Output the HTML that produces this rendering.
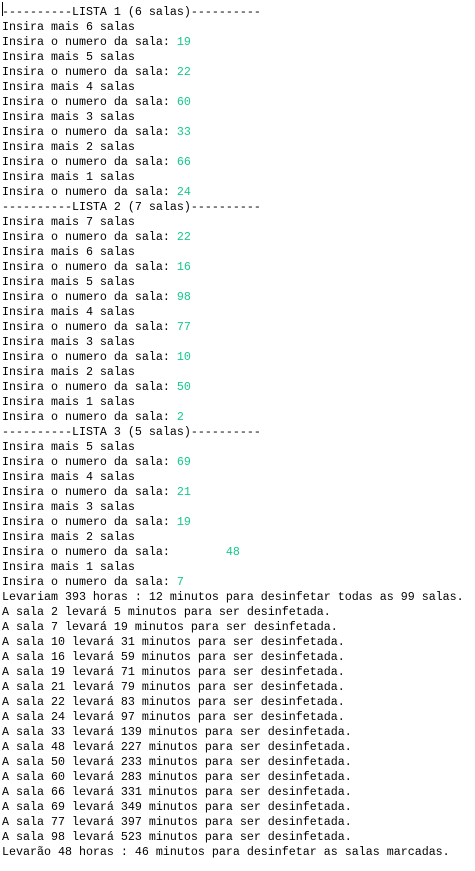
<!DOCTYPE html>
<html><head><meta charset="utf-8"><style>
html,body{margin:0;padding:0;background:#fff;width:475px;height:871px;overflow:hidden}
pre{margin:0;position:absolute;left:2px;top:5px;font-family:"Liberation Mono",monospace;font-size:11.67px;line-height:15px;color:#000}
.g{color:#14c98c}
.cur{position:absolute;left:2px;top:2px;width:1px;height:14px;background:#000}
</style></head><body>
<div class="cur"></div>
<pre>----------LISTA 1 (6 salas)----------
Insira mais 6 salas
Insira o numero da sala: <span class="g">19</span>
Insira mais 5 salas
Insira o numero da sala: <span class="g">22</span>
Insira mais 4 salas
Insira o numero da sala: <span class="g">60</span>
Insira mais 3 salas
Insira o numero da sala: <span class="g">33</span>
Insira mais 2 salas
Insira o numero da sala: <span class="g">66</span>
Insira mais 1 salas
Insira o numero da sala: <span class="g">24</span>
----------LISTA 2 (7 salas)----------
Insira mais 7 salas
Insira o numero da sala: <span class="g">22</span>
Insira mais 6 salas
Insira o numero da sala: <span class="g">16</span>
Insira mais 5 salas
Insira o numero da sala: <span class="g">98</span>
Insira mais 4 salas
Insira o numero da sala: <span class="g">77</span>
Insira mais 3 salas
Insira o numero da sala: <span class="g">10</span>
Insira mais 2 salas
Insira o numero da sala: <span class="g">50</span>
Insira mais 1 salas
Insira o numero da sala: <span class="g">2</span>
----------LISTA 3 (5 salas)----------
Insira mais 5 salas
Insira o numero da sala: <span class="g">69</span>
Insira mais 4 salas
Insira o numero da sala: <span class="g">21</span>
Insira mais 3 salas
Insira o numero da sala: <span class="g">19</span>
Insira mais 2 salas
Insira o numero da sala:        <span class="g">48</span>
Insira mais 1 salas
Insira o numero da sala: <span class="g">7</span>
Levariam 393 horas : 12 minutos para desinfetar todas as 99 salas.
A sala 2 levará 5 minutos para ser desinfetada.
A sala 7 levará 19 minutos para ser desinfetada.
A sala 10 levará 31 minutos para ser desinfetada.
A sala 16 levará 59 minutos para ser desinfetada.
A sala 19 levará 71 minutos para ser desinfetada.
A sala 21 levará 79 minutos para ser desinfetada.
A sala 22 levará 83 minutos para ser desinfetada.
A sala 24 levará 97 minutos para ser desinfetada.
A sala 33 levará 139 minutos para ser desinfetada.
A sala 48 levará 227 minutos para ser desinfetada.
A sala 50 levará 233 minutos para ser desinfetada.
A sala 60 levará 283 minutos para ser desinfetada.
A sala 66 levará 331 minutos para ser desinfetada.
A sala 69 levará 349 minutos para ser desinfetada.
A sala 77 levará 397 minutos para ser desinfetada.
A sala 98 levará 523 minutos para ser desinfetada.
Levarão 48 horas : 46 minutos para desinfetar as salas marcadas.</pre>
</body></html>
